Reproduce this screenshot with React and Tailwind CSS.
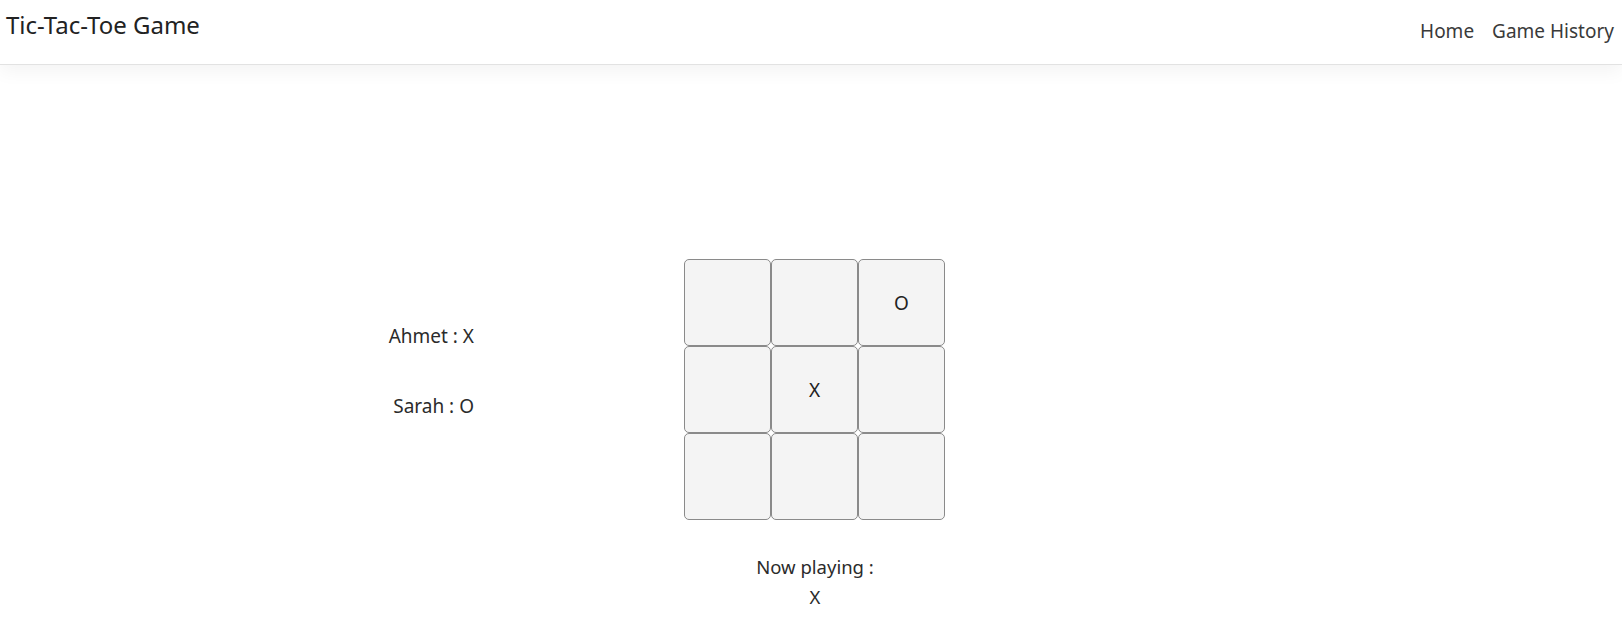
import { useState } from "react";

const Cell = ({ value }) => {
    return (
        <button className="w-[87px] h-[87px] flex items-center justify-center pt-[2px] bg-[#f4f4f4] border border-[#8a8a8a] rounded-[5px] text-[19px] text-[#222]">
            {value}
        </button>
    );
};

const App = () => {
    const [board] = useState(["", "", "O", "", "X", "", "", "", ""]);
    const rows = [board.slice(0, 3), board.slice(3, 6), board.slice(6, 9)];

    return (
        <div className="min-h-[637px] bg-white text-[#2b2b2b] font-['Noto_Sans','Open_Sans',sans-serif]">
            <nav className="h-[65px] flex items-start justify-between border-b border-[#e2e2e2] shadow-[0_6px_18px_rgba(0,0,0,0.05)]">
                <a className="pl-[6px] pt-[9px] text-[24px] leading-[32px] text-[#222]">Tic-Tac-Toe Game</a>
                <div className="flex gap-[18px] pr-[8px] pt-[16px] text-[19px] leading-[30px] text-[#3a3a3a]">
                    <a>Home</a>
                    <a>Game History</a>
                </div>
            </nav>

            <main className="pt-[194px]">
                <div className="flex items-start">
                    <div className="w-[474px] pt-[63px] flex flex-col items-end text-[19px] leading-[28px]">
                        <p>Ahmet : X</p>
                        <p className="mt-[42px]">Sarah : O</p>
                    </div>
                    <div className="ml-[210px] flex flex-col">
                        {rows.map((row, i) => (
                            <div key={i} className="flex">
                                {row.map((v, j) => (
                                    <Cell key={j} value={v} />
                                ))}
                            </div>
                        ))}
                    </div>
                </div>
                <div className="mt-[32px] flex flex-col items-center pl-[8px] text-[18.5px] leading-[30px]">
                    <p>Now playing :</p>
                    <p>X</p>
                </div>
            </main>
        </div>
    );
};

export default App;
